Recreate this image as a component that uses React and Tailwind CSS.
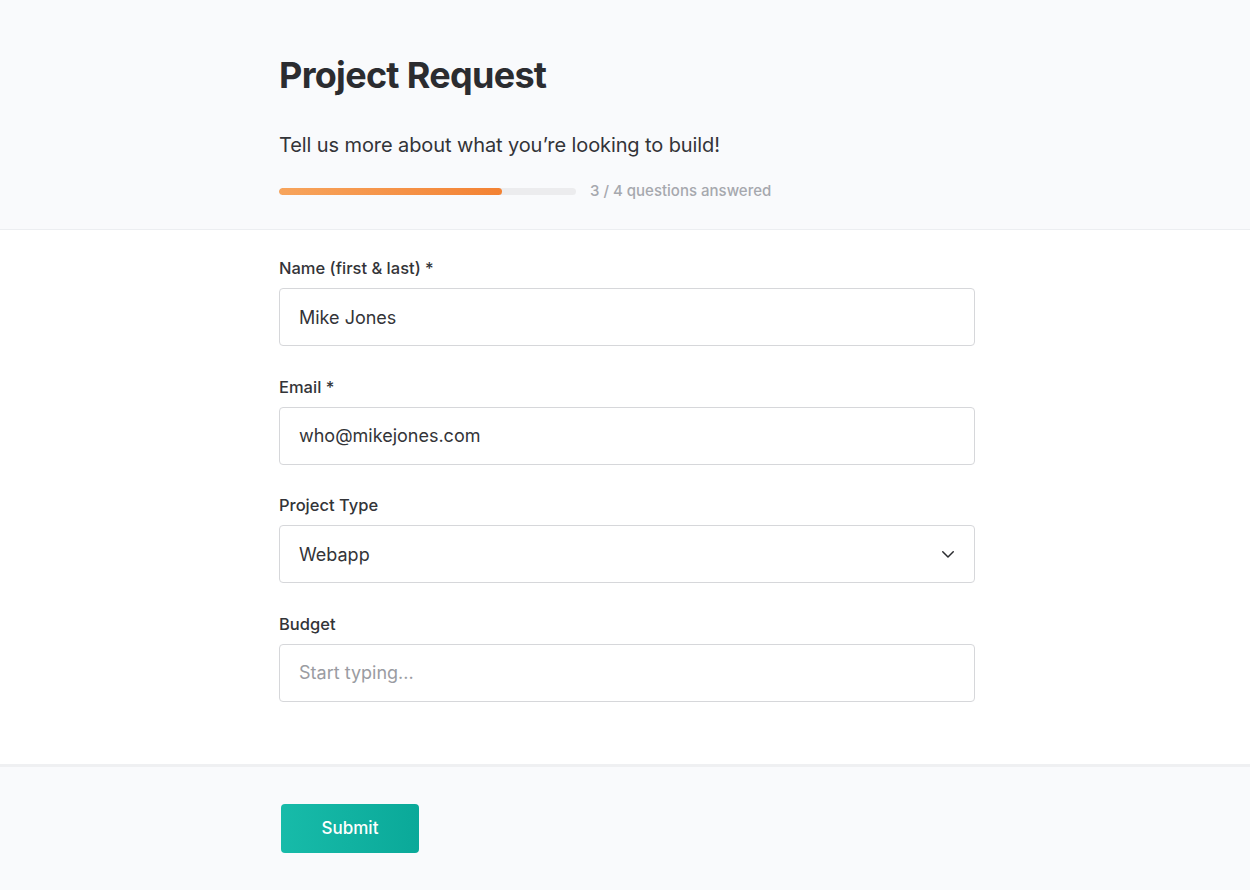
import React, { useState } from "react";

const fontStack = { fontFamily: "Inter, 'Noto Sans', sans-serif" };

const Field = ({ label, children }) => (
  <div className="flex flex-col">
    <label className="text-[16.5px] leading-6 font-medium text-[#333438]">{label}</label>
    <div className="mt-2">{children}</div>
  </div>
);

export default function App() {
  const [name, setName] = useState("Mike Jones");
  const [email, setEmail] = useState("who@mikejones.com");
  const [type, setType] = useState("Webapp");
  const [budget, setBudget] = useState("");

  const inputCls =
    "w-full h-[58px] rounded-[4px] border border-[#d6d7da] bg-white pl-[19px] pr-4 text-[18px] text-[#333438] placeholder:text-[#9a9ca2] outline-none";

  return (
    <div className="min-h-screen w-full bg-white" style={fontStack}>
      {/* header */}
      <header className="bg-[#f9fafc] border-b border-[#eceef1]">
        <div className="w-[700px] mx-auto pl-[4px] pt-[53px] pb-[28px]">
          <h1 className="text-[36px] leading-[44px] font-bold text-[#2b2c30] tracking-[-0.7px]">
            Project Request
          </h1>
          <p className="mt-[34px] text-[20px] leading-7 text-[#333438] tracking-[-0.1px]">
            Tell us more about what you’re looking to build!
          </p>
          <div className="mt-[22px] flex items-center gap-[14px]">
            <div className="mt-[1px] w-[297px] h-[7px] rounded-full bg-[#ececee] overflow-hidden">
              <div className="h-full w-[75%] rounded-full bg-gradient-to-r from-[#f7a45c] to-[#f38233]" />
            </div>
            <span className="text-[15px] leading-5 font-medium text-[#a6a8ae]">
              3 / 4 questions answered
            </span>
          </div>
        </div>
      </header>

      {/* form */}
      <main className="bg-white">
        <div className="w-[700px] mx-auto pl-[4px] pt-[26px] pb-[62px] flex flex-col gap-[28.6px]">
          <Field label="Name (first & last) *">
            <input className={inputCls} value={name} onChange={(e) => setName(e.target.value)} />
          </Field>
          <Field label="Email *">
            <input className={inputCls} value={email} onChange={(e) => setEmail(e.target.value)} />
          </Field>
          <Field label="Project Type">
            <div className="relative">
              <select
                className={`${inputCls} appearance-none`}
                value={type}
                onChange={(e) => setType(e.target.value)}
              >
                <option>Webapp</option>
                <option>Mobile app</option>
                <option>Website</option>
              </select>
              <svg
                className="pointer-events-none absolute right-[18px] top-1/2 -translate-y-1/2"
                width="18"
                height="18"
                viewBox="0 0 24 24"
                fill="none"
                stroke="#2b2c30"
                strokeWidth="2"
                strokeLinecap="round"
                strokeLinejoin="round"
              >
                <path d="M5 9l7 7 7-7" />
              </svg>
            </div>
          </Field>
          <Field label="Budget">
            <input
              className={inputCls}
              placeholder="Start typing..."
              value={budget}
              onChange={(e) => setBudget(e.target.value)}
            />
          </Field>
        </div>
      </main>

      {/* footer */}
      <footer className="bg-[#f9fafc] border-t-[3px] border-[#eff0f2] min-h-[124px]">
        <div className="w-[700px] mx-auto pl-[6px] pt-[37px] pb-[38px]">
          <button className="w-[138px] h-[49px] rounded-[4px] bg-gradient-to-r from-[#17bba9] to-[#0aa999] text-white text-[17px] font-medium">
            Submit
          </button>
        </div>
      </footer>
    </div>
  );
}
